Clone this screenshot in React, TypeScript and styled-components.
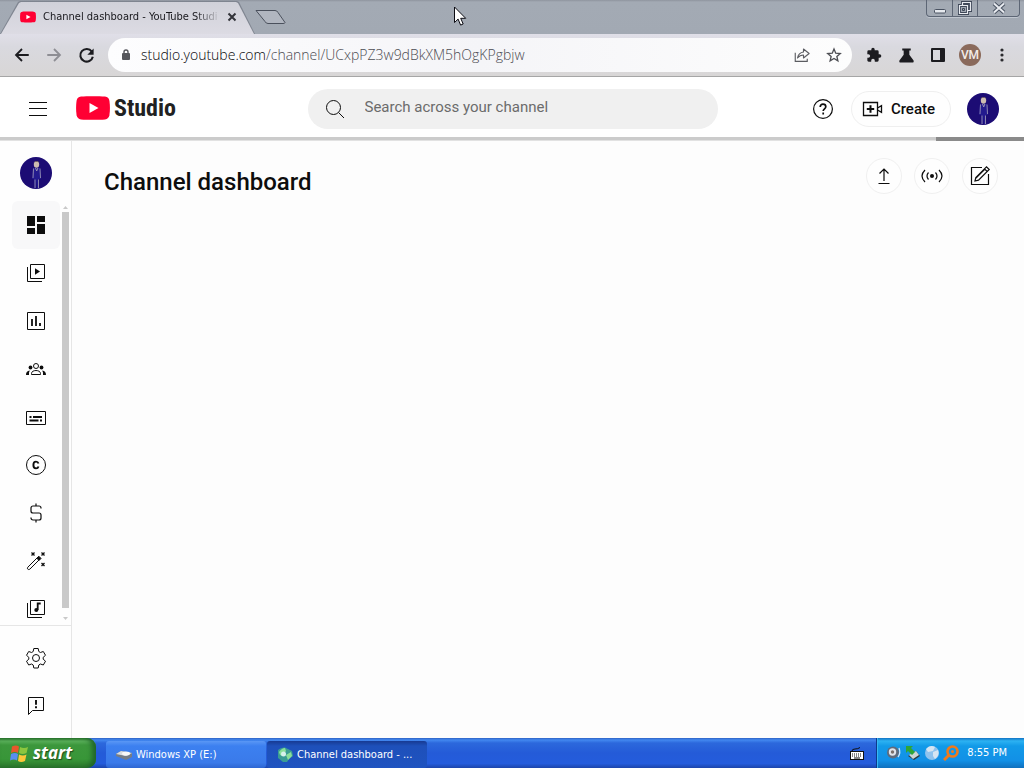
import React from "react";
import styled, { createGlobalStyle, css } from "styled-components";

const ui = `"DejaVu Sans Condensed", "DejaVu Sans", sans-serif`;

const GlobalStyle = createGlobalStyle`
  *, *::before, *::after { box-sizing: border-box; }
  body { margin: 0; background: #fdfdfd; font-family: Roboto, sans-serif; color: #0d0d0d; }
  button, input { font: inherit; color: inherit; }
  button { padding: 0; border: 0; background: none; cursor: pointer; }
  a { color: inherit; text-decoration: none; }
  svg { display: block; flex: none; }
`;

const Screen = styled.div`
  position: relative;
  display: flex;
  flex-direction: column;
  height: 100vh;
  overflow: hidden;
`;

/* ---------- browser frame ---------- */

const TitleBar = styled.div`
  display: flex;
  align-items: flex-start;
  height: 34px;
  background: linear-gradient(#8e949e 0, #a3aab4 2px, #a2a9b3 100%);
`;

const Tab = styled.div`
  position: relative;
  display: flex;
  align-items: center;
  width: 255px;
  height: 34px;
  padding: 0 15px 0 20px;
  font: 11px/16px ${ui};
  color: #17171c;
  background: #7f8590;
  clip-path: polygon(0 100%, 18px 2px, 20px 1px, 237px 1px, 239px 2px, 100% 100%);
  &::before {
    content: "";
    position: absolute;
    inset: 0;
    background: linear-gradient(#d0d1d9, #dcdbe3);
    clip-path: polygon(1px 100%, 19px 3px, 21px 2px, 236px 2px, 238px 3px, 254px 100%);
  }
  & > * { position: relative; }
`;

const TabTitle = styled.span`
  flex: 1;
  margin-left: 7px;
  white-space: nowrap;
  mask-image: linear-gradient(90deg, #000 84%, transparent 98%);
`;

const TabClose = styled.button`
  display: grid;
  place-items: center;
  width: 16px;
  height: 16px;
`;

const NewTab = styled.button`
  margin-top: 9px;
`;

const WindowControls = styled.div`
  display: flex;
  height: 17px;
  margin-left: auto;
  margin-right: 4px;
  border: 1px solid #5d6675;
  border-top: 0;
  border-radius: 0 0 4px 4px;
  box-shadow: 0 1px 0 #c0c6cf;
`;

const WindowButton = styled.button<{ $wide?: boolean }>`
  display: grid;
  place-items: center;
  width: ${(p) => (p.$wide ? 42 : 25)}px;
  & + & { border-left: 1px solid #5d6675; }
`;

const Toolbar = styled.div`
  display: flex;
  align-items: center;
  height: 43px;
  padding: 0 6px;
  background: linear-gradient(#e0dfe8 0, #d9d9df 30%, #d8d6d6 100%);
  border-bottom: 1px solid #a6a6a6;
`;

const ToolButton = styled.button`
  display: grid;
  place-items: center;
  width: 32px;
  height: 32px;
`;

const AddressBar = styled.div`
  display: flex;
  flex: 1;
  align-items: center;
  height: 34px;
  min-width: 0;
  margin: 0 6px;
  padding: 0 2px 0 12px;
  background: linear-gradient(90deg, #fdfdfe, #f5f5f8 50%, #fdfdfd);
  border-radius: 17px;
`;

const Url = styled.a`
  flex: 1;
  overflow: hidden;
  margin-left: 9px;
  font: 300 14px/20px "Open Sans", sans-serif;
  white-space: nowrap;
  color: #4c4c52;
  b { font-weight: 300; color: #050508; }
`;

const ProfileBadge = styled.span`
  display: grid;
  place-items: center;
  width: 22px;
  height: 22px;
  border-radius: 50%;
  background: #8a6a5c;
  color: #f3ece9;
  font: 500 12px/22px Roboto, sans-serif;
`;

/* ---------- studio page ---------- */

const Header = styled.header`
  display: grid;
  grid-template-columns: 1fr minmax(0, 410px) 1fr;
  align-items: center;
  height: 60px;
  padding: 3px 25px 0 26px;
  background: #fff;
`;

const HeaderSide = styled.div<{ $end?: boolean }>`
  display: flex;
  align-items: center;
  gap: ${(p) => (p.$end ? 16 : 26)}px;
  justify-content: ${(p) => (p.$end ? "flex-end" : "flex-start")};
`;

const IconButton = styled.button`
  display: grid;
  place-items: center;
  width: 24px;
  height: 24px;
`;

const Logo = styled.a`
  display: flex;
  align-items: center;
  gap: 4px;
  padding-bottom: 2px;
  font: 700 24px/32px "Liberation Sans Narrow", "Roboto Condensed", sans-serif;
  color: #212121;
`;

const SearchBox = styled.label`
  display: flex;
  align-items: center;
  gap: 18px;
  height: 40px;
  padding: 0 15px;
  border-radius: 20px;
  background: #f0f0f0;
  input {
    flex: 1;
    min-width: 0;
    padding: 0 0 3px;
    border: 0;
    outline: 0;
    background: none;
    font: 15px/20px Roboto, sans-serif;
  }
  input::placeholder { color: #6b6b6b; opacity: 1; }
`;

const CreateButton = styled.button`
  display: flex;
  align-items: center;
  gap: 6px;
  height: 36px;
  padding: 0 15px 0 9px;
  border: 1px solid #efefef;
  border-radius: 18px;
  background: #fefefe;
  font: 500 15px/20px Roboto, sans-serif;
`;

const AccountLink = styled.a`
  display: block;
`;

const LoadingBar = styled.div`
  height: 4px;
  background: #cbcbcb;
  border-bottom: 1px solid #e2e2e2;
`;

const LoadingFill = styled.div`
  width: 88px;
  height: 4px;
  margin-left: auto;
  background: #8a8a8a;
`;

const Body = styled.div`
  display: flex;
  flex: 1;
  min-height: 0;
`;

const Sidebar = styled.aside`
  display: flex;
  flex-direction: column;
  width: 72px;
  background: #fefefe;
  border-right: 1px solid #e6e6e6;
`;

const Channel = styled.a`
  display: block;
  padding: 16px 0 12px 20px;
`;

const NavArea = styled.div`
  display: flex;
  flex: 1;
  min-height: 0;
`;

const NavList = styled.nav`
  flex: 1;
  overflow: hidden;
  padding-left: 12px;
`;

const NavItem = styled.a<{ $active?: boolean }>`
  display: grid;
  place-items: center;
  width: 48px;
  height: 48px;
  border-radius: 6px;
  ${(p) => p.$active && css`background: #f8f8f9;`}
`;

const ScrollTrack = styled.div`
  display: flex;
  flex-direction: column;
  align-items: center;
  gap: 3px;
  width: 7px;
  margin-right: 2px;
  padding: 5px 0;
`;

const ScrollThumb = styled.div`
  flex: 1;
  width: 7px;
  margin-bottom: 6px;
  background: #c9c9c9;
`;

const SideFooter = styled.div`
  padding: 8px 0 8px 12px;
  border-top: 1px solid #e6e6e6;
`;

const Main = styled.main`
  display: flex;
  flex: 1;
  align-items: flex-start;
  justify-content: space-between;
  padding: 17px 26px 0 32px;
  background: #fdfdfd;
`;

const Heading = styled.h1`
  margin: 8px 0 0;
  font: 500 24px/32px Roboto, sans-serif;
`;

const Actions = styled.div`
  display: flex;
  gap: 12px;
`;

const ActionButton = styled.button`
  display: grid;
  place-items: center;
  width: 36px;
  height: 36px;
  border: 1px solid #f0f0f0;
  border-radius: 50%;
  background: #fefefe;
`;

/* ---------- taskbar ---------- */

const Taskbar = styled.footer`
  display: flex;
  align-items: stretch;
  height: 30px;
  font: 11px/16px ${ui};
  color: #fff;
  background: linear-gradient(#2f62c4 0, #4288f0 2px, #2c68dc 5px, #245bd8 50%, #245cdc 85%, #1c45ab 100%);
`;

const StartButton = styled.button`
  display: flex;
  align-items: center;
  gap: 4px;
  width: 96px;
  padding: 0 0 0 10px;
  border-radius: 0 9px 9px 0;
  background: linear-gradient(#2c7a2c 0, #5cb35c 3px, #3c973c 7px, #389638 70%, #2b772b 100%);
  box-shadow: inset -4px 0 5px #21662a;
  color: #fff;
  font: italic 700 17px/24px "Open Sans", sans-serif;
  text-shadow: 1px 1px 1px #1d4d1d;
`;

const Tasks = styled.div`
  display: flex;
  flex: 1;
  align-items: flex-end;
  gap: 1px;
  padding: 0 0 0 10px;
`;

const Task = styled.button<{ $pressed?: boolean }>`
  display: flex;
  align-items: center;
  gap: 4px;
  width: 160px;
  height: 27px;
  padding: 0 10px;
  border-radius: 3px;
  white-space: nowrap;
  background: ${(p) =>
    p.$pressed
      ? "linear-gradient(#173a92, #1e50ba 5px, #1f53c0)"
      : "linear-gradient(#5a97f5, #3c80f0 5px, #3a7aea 80%, #2e66d2)"};
`;

const Keyboard = styled.button`
  display: grid;
  place-items: center;
  width: 38px;
`;

const Tray = styled.div`
  display: flex;
  align-items: center;
  gap: 3px;
  padding: 0 17px 0 9px;
  border-left: 1px solid #0d3a8c;
  background: linear-gradient(#1273c4 0, #2cb2f2 3px, #129ae8 8px, #1290e6 75%, #1070bd 100%);
  box-shadow: inset 1px 0 0 #38b8f4;
  white-space: nowrap;
`;

const Clock = styled.time`
  margin-left: 5px;
`;

const Pointer = styled.svg`
  position: absolute;
  left: 454px;
  top: 6px;
`;

/* ---------- drawings ---------- */

const Line = ({ children, size = 24, w = 1, color = "#0d0d0d" }: {
  children: React.ReactNode; size?: number; w?: number; color?: string;
}) => (
  <svg width={size} height={size} viewBox="0 0 24 24" fill="none" stroke={color} strokeWidth={w} aria-hidden="true">
    {children}
  </svg>
);

const Solid = ({ children, size = 24, color = "#0d0d0d" }: {
  children: React.ReactNode; size?: number; color?: string;
}) => (
  <svg width={size} height={size} viewBox="0 0 24 24" fill={color} aria-hidden="true">{children}</svg>
);

const PlayBadge = ({ width, height }: { width: number; height: number }) => (
  <svg width={width} height={height} viewBox="0 0 34 24" aria-hidden="true">
    <path fill="#ff0033" d="M5 .6C11 .1 23 .1 29 .6c2.500.3 4 1.700 4.400 4.100.7 4.700.7 9.900 0 14.600-.4 2.400-1.900 3.800-4.400 4.100-6 .6-18 .6-24 0C2.500 23.100 1 21.700.6 19.300c-.7-4.700-.7-9.900 0-14.600C1 2.300 2.500.9 5 .6z" />
    <path fill="#fff" d="M13.500 7v10l9-5z" />
  </svg>
);

const Avatar = () => (
  <svg width="32" height="32" viewBox="0 0 32 32" role="img" aria-label="Channel avatar">
    <circle cx="16" cy="16" r="16" fill="#1c0c74" />
    <path d="M13 11h7l1 11h-2l-1 9h-1l-.5-8-.5 8h-1l-1-9h-2z" fill="#231a8e" />
    <path d="M13.500 11.500 13 21m7-9.500.5 9.500M15 22.500V31m3.500-8.500V31" stroke="#8c86b0" strokeWidth="1" fill="none" />
    <path d="m15.500 11 1.200 3 1.200-3" stroke="#9a94b4" fill="none" />
    <ellipse cx="16.500" cy="7.500" rx="2.700" ry="3.300" fill="#cdbdb0" />
    <path d="M13.500 6.500c0-3.500 6-3.500 6 0l-1-1.500h-4z" fill="#6d5b62" />
  </svg>
);

const navItems: { label: string; active?: boolean; icon: React.ReactNode }[] = [
  { label: "Dashboard", active: true, icon: <Solid><path d="M3 3h8v10H3zM13 3h8v6h-8zM3 15h8v6H3zM13 11h8v10h-8z" /></Solid> },
  { label: "Content", icon: <Line><path d="M6.500 3.500h14v14h-14zM3.500 6v14.500H18" /><path d="M11 7.300v6.400l5-3.200z" fill="#0d0d0d" stroke="none" /></Line> },
  { label: "Analytics", icon: <Line><path d="M3.500 3.500h17v17h-17z" /><path d="M8 10v7m4-10v10m4-3v3" strokeWidth="1.800" /></Line> },
  { label: "Community", icon: (
    <Line>
      <circle cx="12" cy="9" r="2.500" />
      <path d="M7.500 17.500v-1c0-4 9-4 9 0v1z" />
      <circle cx="6.500" cy="10.500" r="1.900" fill="#0d0d0d" stroke="none" />
      <circle cx="17.500" cy="10.500" r="1.900" fill="#0d0d0d" stroke="none" />
      <path d="M2 18c0-2.500 1-4 3.800-4.500L5 15.500V18zM22 18c0-2.500-1-4-3.800-4.500l.8 2V18z" fill="#0d0d0d" stroke="none" />
    </Line>
  ) },
  { label: "Subtitles", icon: <Line><path d="M2.500 6.500h19v13h-19z" /><path d="M5.500 12h2m1.500 0h9M5.500 15.500h9m1.500 0h2" strokeWidth="1.800" /></Line> },
  { label: "Copyright", icon: <Line><circle cx="12" cy="12" r="9.500" /><path d="M14.500 10.500c-.4-1.300-1.300-1.900-2.500-1.900-1.600 0-2.600 1.300-2.600 3.400s1 3.400 2.600 3.400c1.200 0 2.100-.6 2.500-1.900" strokeWidth="1.900" /></Line> },
  { label: "Earn", icon: <Line w={1.200}><path d="M17 7.500V7c0-1.200-.8-2-2-2H9C7.800 5 7 5.800 7 7v3c0 1.200.8 2 2 2h6c1.200 0 2 .8 2 2v3c0 1.200-.8 2-2 2H9c-1.200 0-2-.8-2-2v-.5M12 2.500V5m0 14v2.500" /></Line> },
  { label: "Customization", icon: <Line><path d="m3.800 18.200 9.900-9.900 2 2-9.900 9.900c-1.500 1.100-3.200-.6-2-2z" /><path d="m12.800 9.200 2-2 2.200 2.200-2 2z" fill="#0d0d0d" /><path d="m7.500 3.500 3 3m0-3-3 3m10-3 3 3m0-3-3 3m0 7.500 3 3m0-3-3 3" strokeWidth="1.300" /></Line> },
  { label: "Audio library", icon: <Line><path d="M6.500 3.500h14v14h-14zM3.500 6v14.500H18" /><circle cx="12.300" cy="13" r="2" fill="#0d0d0d" stroke="none" /><path d="M13.700 13V6.500h3" strokeWidth="1.800" /></Line> },
];

const footerItems = [
  { label: "Settings", icon: <Line><circle cx="12" cy="12" r="3.500" /><path d="M9.800 2.500h4.400l.6 3 1.600 1 2.900-1 2.200 3.800-2.300 2v1.900l2.300 2-2.200 3.800-2.900-1-1.600 1-.6 3H9.800l-.6-3-1.600-1-2.900 1-2.200-3.800 2.300-2v-1.900l-2.300-2 2.200-3.800 2.900 1 1.600-1z" strokeLinejoin="round" /></Line> },
  { label: "Send feedback", icon: <Line><path d="M4.500 20.500v-17h15v13h-11z" /><path d="M12 6v4.700m0 1.600v2" strokeWidth="1.900" /></Line> },
];

export default function App() {
  return (
    <Screen>
      <GlobalStyle />
      <TitleBar>
        <Tab>
          <PlayBadge width={16} height={12} />
          <TabTitle>Channel dashboard - YouTube Studi</TabTitle>
          <TabClose aria-label="Close tab">
            <Line size={12} w={4} color="#33343a"><path d="m5 5 14 14M19 5 5 19" /></Line>
          </TabClose>
        </Tab>
        <NewTab aria-label="New tab">
          <svg width="31" height="16" viewBox="0 0 31 16" aria-hidden="true">
            <path d="M1 1.500h19q2 0 3 2l7 10q0 1-2 1H13q-2 0-3-2z" fill="#b1b6c0" stroke="#4a505c" />
          </svg>
        </NewTab>
        <WindowControls>
          <WindowButton aria-label="Minimize">
            <svg width="12" height="14" viewBox="0 0 12 14"><rect x=".5" y="8.500" width="11" height="3.500" rx="1" fill="#e6e9ee" stroke="#4a5362" /></svg>
          </WindowButton>
          <WindowButton aria-label="Restore">
            <svg width="14" height="14" viewBox="0 0 14 14" fill="none">
              <path d="M4.500 4V1.500h8v8H10M1.500 4.500h8v8h-8z" stroke="#3f4858" strokeWidth="3" />
              <path d="M4.500 4V1.500h8v8H10M1.500 4.500h8v8h-8z" stroke="#e8ebf0" strokeWidth="1.200" />
              <path d="M4.500 7.500h2v2h-2z" stroke="#3f4858" />
            </svg>
          </WindowButton>
          <WindowButton $wide aria-label="Close window">
            <svg width="14" height="12" viewBox="0 0 14 12" fill="none">
              <path d="m2 1.500 10 9m0-9-10 9" stroke="#4a5362" strokeWidth="4" />
              <path d="m2 1.500 10 9m0-9-10 9" stroke="#e8ebf0" strokeWidth="2" />
            </svg>
          </WindowButton>
        </WindowControls>
      </TitleBar>

      <Toolbar>
        <ToolButton aria-label="Back"><Line size={18} w={2.400} color="#1c1c20"><path d="M21 12H4m8-8-8 8 8 8" /></Line></ToolButton>
        <ToolButton aria-label="Forward"><Line size={18} w={2.400} color="#8e8e94"><path d="M3 12h17m-8-8 8 8-8 8" /></Line></ToolButton>
        <ToolButton aria-label="Reload">
          <Line size={19} w={2.600} color="#1c1c20"><path d="M18.700 7A8 8 0 1 0 20 13.500" /><path d="M21 3v8h-8z" fill="#1c1c20" stroke="none" /></Line>
        </ToolButton>
        <AddressBar>
          <svg width="12" height="14" viewBox="0 0 12 14" aria-hidden="true">
            <rect x="2" y="5" width="8" height="7" rx="1" fill="#55565b" />
            <path d="M4 5.500V4a2 2 0 0 1 4 0v1.500" fill="none" stroke="#55565b" strokeWidth="1.400" />
          </svg>
          <Url href="#"><b>studio.youtube.com</b>/channel/UCxpPZ3w9dBkXM5hOgKPgbjw</Url>
          <ToolButton aria-label="Share">
            <Line size={18} w={1.500} color="#5b5c61"><path d="M3 9v11.500h16V17" /><path d="M14 4v4c-4.500.5-7 3-8 8 2.500-3 4.500-4 8-4v4l7.500-6z" strokeLinejoin="round" /></Line>
          </ToolButton>
          <ToolButton aria-label="Bookmark">
            <Line size={16} w={2} color="#4d4e53"><path d="m12 3 2.600 6.200 6.800.6-5.100 4.400 1.500 6.600-5.800-3.500-5.800 3.500 1.500-6.600-5.100-4.400 6.800-.6z" /></Line>
          </ToolButton>
        </AddressBar>
        <ToolButton aria-label="Extensions">
          <Solid size={16} color="#1c1c20"><path d="M20.500 11H19V7a2 2 0 0 0-2-2h-4V3.500a2.500 2.500 0 0 0-5 0V5H4a2 2 0 0 0-2 2v3.800h1.500a2.700 2.700 0 0 1 0 5.400H2V20c0 1.100.9 2 2 2h3.800v-1.500a2.700 2.700 0 0 1 5.400 0V22H17a2 2 0 0 0 2-2v-4h1.500a2.500 2.500 0 0 0 0-5z" /></Solid>
        </ToolButton>
        <ToolButton aria-label="Experiments">
          <Solid size={17} color="#1c1c20"><path d="M6 2h12v3h-2v6l6 8c.5 1.500 0 3-1.500 3h-17C2 22 1.500 20.500 2 19l6-8V5H6z" /></Solid>
        </ToolButton>
        <ToolButton aria-label="Side panel">
          <svg width="14" height="14" viewBox="0 0 14 14"><path fill="#1c1c20" fillRule="evenodd" d="M0 1q0-1 1-1h12q1 0 1 1v12q0 1-1 1H1q-1 0-1-1zM2 2v10h7V2z" /></svg>
        </ToolButton>
        <ToolButton aria-label="Profile"><ProfileBadge>VM</ProfileBadge></ToolButton>
        <ToolButton aria-label="Menu">
          <svg width="4" height="14" viewBox="0 0 4 14" fill="#2a2a2e"><circle cx="2" cy="2" r="1.600" /><circle cx="2" cy="7" r="1.600" /><circle cx="2" cy="12" r="1.600" /></svg>
        </ToolButton>
      </Toolbar>

      <Header>
        <HeaderSide>
          <IconButton aria-label="Collapse menu"><Line><path d="M3 5.500h18M3 11.500h18M3 18.500h18" /></Line></IconButton>
          <Logo href="#"><PlayBadge width={34} height={24} />Studio</Logo>
        </HeaderSide>
        <SearchBox>
          <Line><circle cx="10.500" cy="10.500" r="7" /><path d="m15.500 15.500 5.500 5.500" /></Line>
          <input type="text" placeholder="Search across your channel" aria-label="Search across your channel" />
        </SearchBox>
        <HeaderSide $end>
          <IconButton aria-label="Help">
            <Line w={1.200}><circle cx="12" cy="12" r="9.400" /><path d="M9.200 10c0-1.800 1.200-2.800 2.800-2.800s2.800 1 2.800 2.500c0 2-2.600 2.200-2.600 4.300m0 1.400v2" strokeWidth="1.700" /></Line>
          </IconButton>
          <CreateButton>
            <Line w={1.300}><path d="M2.500 5.500h14v13h-14z" /><path d="m16.500 11 4-2.300v6.600l-4-2.300" /><path d="M9.500 8.300v7.400M5.800 12h7.400" strokeWidth="2" /></Line>
            Create
          </CreateButton>
          <AccountLink href="#"><Avatar /></AccountLink>
        </HeaderSide>
      </Header>
      <LoadingBar role="progressbar" aria-label="Loading"><LoadingFill /></LoadingBar>

      <Body>
        <Sidebar>
          <Channel href="#"><Avatar /></Channel>
          <NavArea>
            <NavList aria-label="Studio sections">
              {navItems.map((n) => (
                <NavItem key={n.label} href="#" aria-label={n.label} $active={n.active}>{n.icon}</NavItem>
              ))}
            </NavList>
            <ScrollTrack>
              <svg width="5" height="3" viewBox="0 0 5 3" fill="#c9c9c9"><path d="m0 3 2.500-3L5 3z" /></svg>
              <ScrollThumb />
              <svg width="5" height="3" viewBox="0 0 5 3" fill="#c9c9c9"><path d="m0 0 2.500 3L5 0z" /></svg>
            </ScrollTrack>
          </NavArea>
          <SideFooter>
            {footerItems.map((n) => (
              <NavItem key={n.label} href="#" aria-label={n.label}>{n.icon}</NavItem>
            ))}
          </SideFooter>
        </Sidebar>
        <Main>
          <Heading>Channel dashboard</Heading>
          <Actions>
            <ActionButton aria-label="Upload videos"><Line w={1.200}><path d="M6.500 19.500h11M12 17V5m-4.500 4.500L12 5l4.500 4.500" /></Line></ActionButton>
            <ActionButton aria-label="Go live">
              <Line w={1.200}><circle cx="12" cy="12" r="2" fill="#0d0d0d" stroke="none" /><path d="M8.500 8.500q-3 3.500 0 7m7-7q3 3.500 0 7M5 6q-6 6 0 12M19 6q6 6 0 12" /></Line>
            </ActionButton>
            <ActionButton aria-label="Create post">
              <Line w={1.200}><path d="M14 3.500H3.500v17h17V10" /><path d="m7 17 .8-3.500L18.500 2.800l2.700 2.700L10.500 16.200zM16.500 4.800l2.700 2.700M8 14l9-9" /></Line>
            </ActionButton>
          </Actions>
        </Main>
      </Body>

      <Taskbar>
        <StartButton>
          <svg width="19" height="19" viewBox="0 0 19 19" aria-hidden="true">
            <path d="M2 2.500q4-2 7 0L8 9Q5 7 1 9z" fill="#e8572c" />
            <path d="M10 3q4 2 8 0l-1.500 6q-4 2-7.500 0z" fill="#8cc63f" />
            <path d="M1 10q4-2 7 0l-1 6.500q-3-2-7 0z" fill="#5a8df0" />
            <path d="M9 10.500q4 2 7.500 0L15 17q-4 2-7 0z" fill="#fcc73a" />
          </svg>
          start
        </StartButton>
        <Tasks>
          <Task>
            <svg width="16" height="16" viewBox="0 0 16 16" aria-hidden="true">
              <path d="m0 7 5-3 11 2v4l-6 3-10-4z" fill="#767d86" />
              <path d="m0 7 5-3 11 2-6 3z" fill="#d9dde2" />
              <ellipse cx="10" cy="6.500" rx="4" ry="2" fill="#f8f8f8" />
            </svg>
            Windows XP (E:)
          </Task>
          <Task $pressed>
            <svg width="16" height="16" viewBox="0 0 16 16" aria-hidden="true">
              <path d="M1 3q3-3 7-2.500L15 4l1 5-4 3-2 3H6L1 11z" fill="#3a9c94" />
              <path d="M2 5q3-4 6-4l1 3-3 5-3-1zM9 8l5-3 1 4-4 4z" fill="#8adf9a" />
              <circle cx="6.500" cy="7" r="2.500" fill="#d6f2ec" />
            </svg>
            Channel dashboard - ...
          </Task>
        </Tasks>
        <Keyboard aria-label="Keyboard">
          <svg width="14" height="13" viewBox="0 0 14 13" aria-hidden="true">
            <path d="M2 4q0-2 3-2t5-1.500" fill="none" stroke="#111" />
            <rect x=".5" y="4.500" width="13" height="8" fill="#fff" stroke="#111" />
            <path d="M2 7h10M2 9h10" stroke="#111" strokeDasharray="1 1" /><path d="M4 11h6" stroke="#111" />
          </svg>
        </Keyboard>
        <Tray>
          <svg width="16" height="16" viewBox="0 0 16 16" aria-hidden="true">
            <circle cx="7" cy="7.500" r="6" fill="#5f6b7c" /><circle cx="6.500" cy="7" r="3.700" fill="#dfe3ea" /><circle cx="6.500" cy="7" r="1.700" fill="#7b6f6a" />
            <path d="M12 12q3-4 1-9" fill="none" stroke="#cfe6fb" strokeWidth="1.300" />
          </svg>
          <svg width="16" height="16" viewBox="0 0 16 16" aria-hidden="true">
            <path d="m3 11 8-5 4 5-6 4z" fill="#2e3a3e" /><path d="m4 10 7-4 3 4-6 4z" fill="#cdd6d4" />
            <path d="M1 1h7L6 3l4 4-3 3-4-4-2 2z" fill="#2fa535" />
          </svg>
          <svg width="16" height="16" viewBox="0 0 16 16" aria-hidden="true">
            <circle cx="8" cy="8" r="7" fill="#8fc3ee" /><path d="M2 4q4-5 9-2L9 6l-5 1zM9 7l5-2q2 5-3 9l-2-3z" fill="#d6e5f2" />
          </svg>
          <svg width="16" height="16" viewBox="0 0 16 16" fill="none" stroke="#f07a1a" aria-hidden="true">
            <circle cx="9.500" cy="6.500" r="5" strokeWidth="2.600" /><path d="m6 10-5 5" strokeWidth="3" /><circle cx="9.500" cy="6.500" r="1.500" fill="#f07a1a" stroke="none" />
          </svg>
          <Clock>8:55 PM</Clock>
        </Tray>
      </Taskbar>

      <Pointer width="13" height="21" viewBox="0 0 13 21" aria-hidden="true">
        <path d="M.5 1v15.500l3.600-3.400 2.500 6 2.600-1.100-2.500-5.700h5z" fill="#fff" stroke="#0b0b12" />
      </Pointer>
    </Screen>
  );
}
